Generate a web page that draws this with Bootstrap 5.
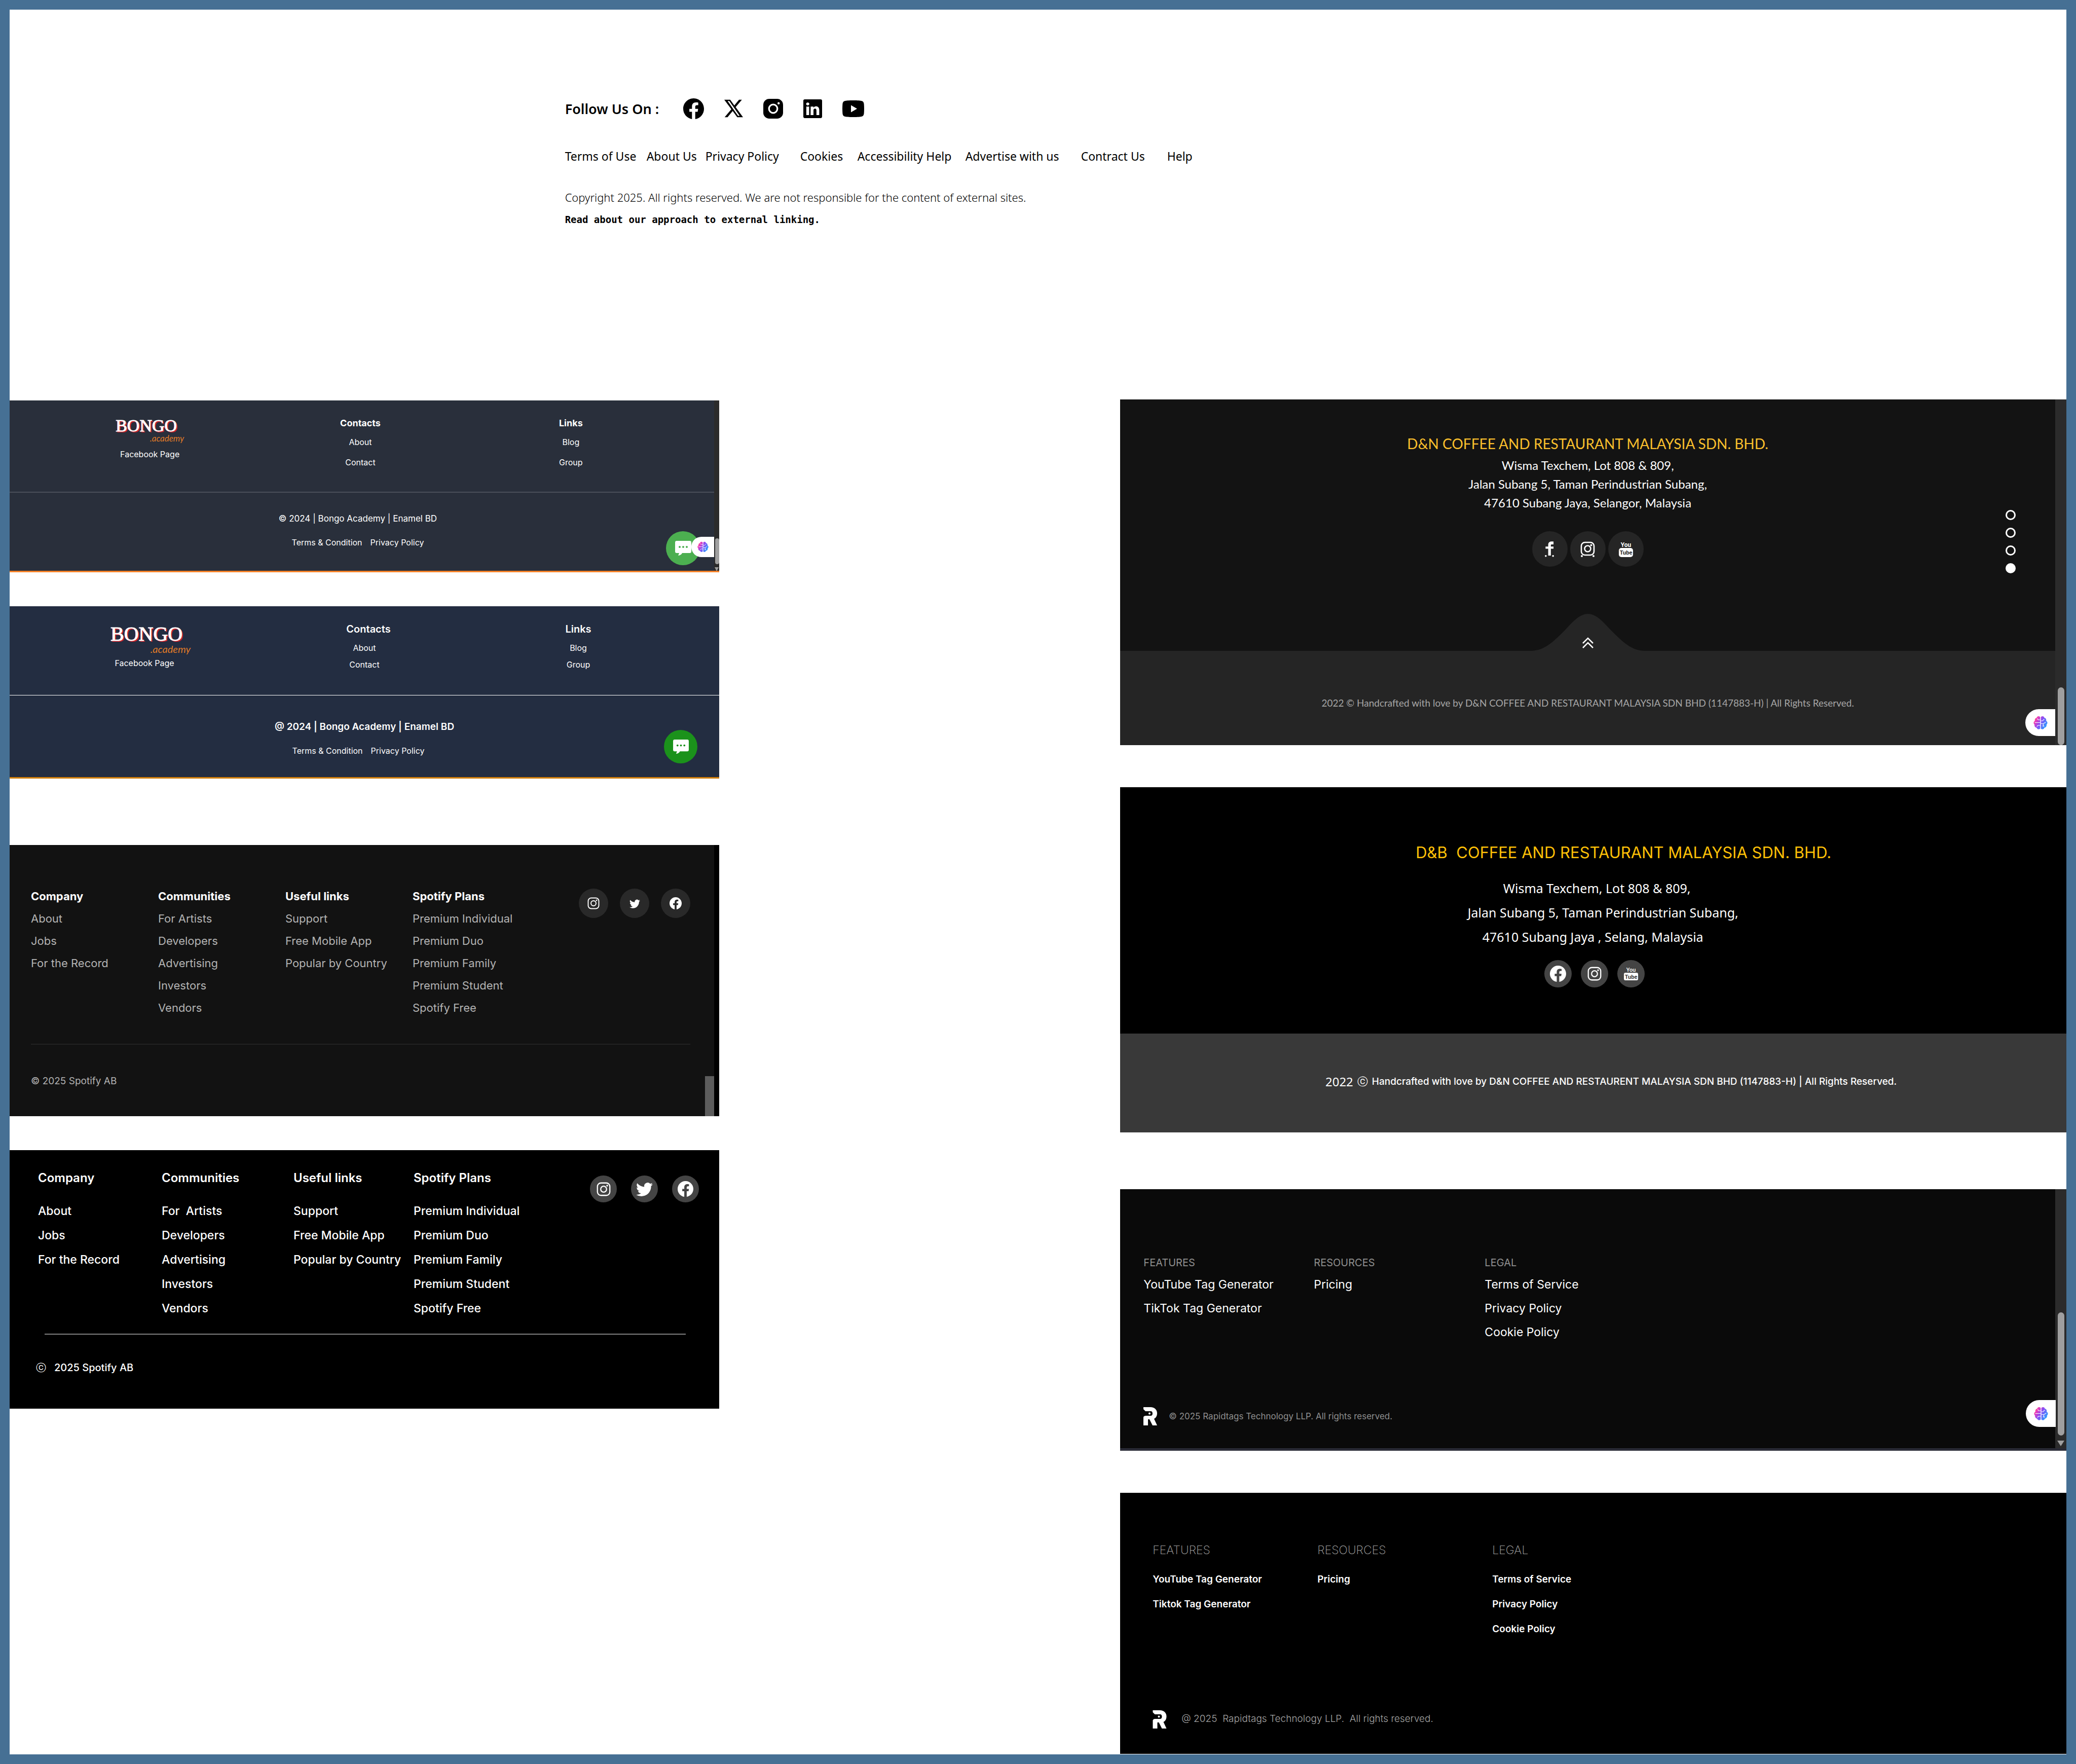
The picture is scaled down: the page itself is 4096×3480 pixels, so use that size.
<!DOCTYPE html>
<html lang="en">
<head>
<meta charset="utf-8">
<meta name="viewport" content="width=device-width, initial-scale=1">
<title>Footer designs</title>
<link rel="stylesheet" href="https://cdn.jsdelivr.net/npm/bootstrap@5.3.0/dist/css/bootstrap.min.css">
<style>
  body { background: #467094; padding: 19px; font-family: Inter, "Open Sans", sans-serif; color: #fff; line-height: 1; }
  a { color: inherit; text-decoration: none; white-space: pre; }
  h2, p, ul { margin: 0; padding: 0; font-size: inherit; line-height: inherit; }
  ul { list-style: none; }
  button { border: 0; padding: 0; background: none; color: inherit; }
  svg { display: block; flex: none; }
  .sheet { min-height: calc(100vh - 38px); background: #fff; }

  /* plain news footer */
  .news { min-height: 769px; padding: 171px 0 0 27%; color: #000; font-family: "Noto Sans", sans-serif; }
  .follow { height: 48px; gap: 40px; font-size: 27px; font-weight: 600; }
  .follow .label { margin-right: 8px; }
  .news-links { margin-top: 53px; display: grid; grid-template-columns: 161px 116px 187px 113px 213px 228px 170px auto; font-size: 23px; line-height: 34px; }
  .news .legal { margin-top: 46px; font-size: 22px; font-weight: 300; line-height: 36px; }
  .news .policy { margin-top: 8px; font: 700 19px/36px "DejaVu Sans Mono", monospace; }

  .left-side { flex: 0 0 34.5%; padding-top: 2px; }
  .right-side { flex: 0 0 46%; }
  .panel { position: relative; overflow: hidden; }
  .disc { display: flex; align-items: center; justify-content: center; border-radius: 50%; flex: none; }
  .rail { flex: none; background: #2b2b2b; }
  .thumb { position: absolute; background: #9f9f9f; border-radius: 7px; }
  .arrow { position: absolute; border: solid transparent; border-top-color: #9f9f9f; border-bottom: 0; }
  .tab { position: absolute; background: #fff; border-radius: 30px 0 0 30px; display: flex; align-items: center; justify-content: center; }
  .chat { position: absolute; }
  .wordmark { display: grid; text-align: left; font-family: "Liberation Serif", serif; text-shadow: 1px 1px 0 #d0202a, 2px 2px 0 #d0202a, -1px 0 0 #d0202a; -webkit-text-stroke: 1px #fff; }
  .wordmark small { justify-self: end; font-family: Lato, sans-serif; font-style: italic; color: #e07b28; text-shadow: none; -webkit-text-stroke: 0; }

  /* bongo */
  .bongo { height: 339px; background: #292f3b; border-bottom: 3px solid #f5822a; font-size: 16px; }
  .bongo .top { height: 182px; padding: 0 75px 0 69px; border-bottom: 2px solid #4a4f5a; text-align: center; }
  .bongo .brand { padding-top: 30px; line-height: 24px; }
  .bongo .wordmark { width: 135px; font-size: 34px; line-height: 39px; }
  .bongo .wordmark small { font-size: 17px; line-height: 12px; }
  .bongo .brand a { margin-top: 13px; }
  .bongo .list { padding-top: 33px; line-height: 40px; }
  .bongo .list h2 { font-size: 18px; line-height: 24px; font-weight: 700; margin-bottom: 5px; }
  .bongo .base { padding: 36px 16px 0 0; line-height: 30px; }
  .bongo .base p { font-size: 17px; margin-bottom: 17px; }
  .bongo .rail { width: 10px; height: 339px; position: relative; z-index: 2; }
  .bongo .thumb { left: 2px; top: 272px; width: 8px; height: 51px; }
  .bongo .arrow { left: 1px; top: 329px; border-width: 8px 4px 0; }
  .bongo .chat { right: 38px; bottom: 11px; width: 67px; height: 67px; background: #4caf50; color: #4caf50; }
  .bongo .tab { right: 10px; top: 269px; width: 45px; height: 40px; }

  .bongo2 { height: 340px; margin-top: 67px; background: #232d41; border-bottom: 3px solid #d17e0a; font-size: 16px; }
  .bongo2 .top { height: 176px; padding: 0 67px; border-bottom: 1px solid #fff; text-align: center; }
  .bongo2 .brand { padding-top: 32px; line-height: 24px; }
  .bongo2 .wordmark { width: 158px; font-size: 40px; line-height: 45px; }
  .bongo2 .wordmark small { font-size: 20px; line-height: 14px; }
  .bongo2 .brand a { margin-top: 9px; }
  .bongo2 .list { padding-top: 33px; line-height: 33px; }
  .bongo2 .list h2 { font-size: 20px; line-height: 24px; font-weight: 600; margin-bottom: 9px; }
  .bongo2 .base { padding-top: 47px; line-height: 30px; }
  .bongo2 .base p { font-size: 19px; font-weight: 600; margin-bottom: 17px; }
  .bongo2 .chat { right: 43px; bottom: 27px; width: 66px; height: 66px; background: #1b921b; color: #1b921b; }

  /* spotify */
  .spot { height: 535px; margin-top: 131px; background: #121212; border-right: 10px solid #000; padding: 79px 47px 0 42px; font-size: 22px; line-height: 44px; color: #b3b3b3; }
  .spot .cols { display: grid; grid-template-columns: 251px 251px 251px 1fr auto; }
  .spot h2 { font-weight: 700; color: #fff; }
  .spot .social { gap: 23px; padding-top: 7px; color: #fff; }
  .spot .disc { width: 58px; height: 58px; background: #292929; }
  .spot .rule { margin-top: 49px; height: 2px; background: #222; }
  .spot p { margin-top: 57px; font-size: 19px; line-height: 30px; }
  .spot .thumb { right: 0; bottom: 0; width: 18px; height: 79px; border-radius: 0; background: #5c5c5c; }

  .spot2 { height: 510px; margin-top: 67px; background: #000; padding: 40px 40px 0 56px; font-size: 23px; font-weight: 500; line-height: 48px; }
  .spot2 .cols { display: grid; grid-template-columns: 244px 260px 237px 1fr auto; }
  .spot2 h2 { font-size: 24px; font-weight: 600; line-height: 30px; margin-bottom: 26px; }
  .spot2 .social { gap: 28px; padding-top: 10px; }
  .spot2 .disc { width: 53px; height: 53px; background: #444; }
  .spot2 .rule { margin: 26px 26px 0 13px; height: 2px; background: #808080; }
  .spot2 p { margin: 50px 0 0 -4px; gap: 16px; font-size: 20px; line-height: 30px; }

  /* coffee */
  .coffee { height: 682px; background: #252525; font-family: Lato, "Open Sans", sans-serif; text-align: center; }
  .coffee .top { position: relative; height: 496px; padding-top: 68px; background: #131313; font-size: 24px; line-height: 37px; }
  .coffee h2 { font-size: 28px; line-height: 38px; font-weight: 400; color: #fbc02d; margin-bottom: 5px; }
  .coffee .social { margin-top: 38px; gap: 5px; }
  .coffee .disc { width: 70px; height: 70px; background: #252525; }
  .coffee .base { padding-top: 88px; font-size: 19px; line-height: 30px; color: #a6a6a6; }
  .coffee .to-top { position: absolute; bottom: 0; left: 50%; margin-left: -113px; }
  .coffee .pager { position: absolute; right: 78px; top: 218px; display: grid; gap: 15px; }
  .coffee .pager button { width: 20px; height: 20px; border: 3px solid #fff; border-radius: 50%; background: none; }
  .coffee .pager button.on { background: #fff; }
  .coffee .rail, .tags .rail { width: 22px; position: relative; }
  .coffee .thumb { left: 5px; bottom: 0; width: 13px; height: 114px; }
  .coffee .tab { right: 22px; top: 611px; width: 59px; height: 53px; }

  .coffee2 { height: 681px; margin-top: 83px; background: #393939; text-align: center; }
  .coffee2 .top { height: 486px; padding-top: 109px; background: #000; }
  .coffee2 h2 { padding-left: 119px; font-size: 31px; font-weight: 400; line-height: 40px; color: #ffc107; white-space: pre; margin-bottom: 26px; }
  .coffee2 address { margin: 0; padding-left: 14px; font: 400 25px/48px "Noto Sans", sans-serif; }
  .coffee2 .social { margin-top: 22px; padding-left: 5px; gap: 18px; }
  .coffee2 .disc { width: 54px; height: 54px; background: #444; }
  .coffee2 .base { padding: 75px 0 0 70px; gap: 8px; font-size: 19px; font-weight: 500; line-height: 40px; }
  .coffee2 .year { font: 400 24px/40px "Noto Sans", sans-serif; }
  .coffee2 .mark-c { font-size: 21px; font-weight: 300; }

  /* rapidtags */
  .tags { height: 516px; margin-top: 112px; background: #0a0a0a; border-bottom: 5px solid #2a2b36; font-size: 23px; line-height: 47px; }
  .tags .body { padding: 130px 0 0 46px; }
  .tags .cols { display: grid; grid-template-columns: 336px 337px auto; }
  .tags h2 { font-size: 20px; font-weight: 400; line-height: 30px; color: #8f8f8f; margin-bottom: 5px; }
  .tags .sign { margin-top: 124px; gap: 23px; font-size: 17px; line-height: 36px; color: #8f8f8f; }
  .tags .tab { right: 21px; top: 416px; width: 59px; height: 53px; }
  .tags .thumb { left: 5px; top: 243px; width: 13px; height: 243px; }
  .tags .arrow { left: 4px; top: 496px; border-width: 11px 7px 0; }

  .tags2 { height: 515px; margin-top: 83px; background: #000; padding: 98px 0 0 64px; font-size: 19px; font-weight: 600; line-height: 49px; }
  .tags2 .cols { display: grid; grid-template-columns: 325px 345px auto; }
  .tags2 h2 { font-size: 23px; font-weight: 200; line-height: 30px; color: #a6a6a6; margin-bottom: 18px; }
  .tags2 .sign { margin-top: 136px; gap: 29px; font-weight: 300; line-height: 34px; color: #a6a6a6; white-space: pre; }
  .sign svg { color: #fff; }
</style>
<script src="https://cdn.jsdelivr.net/npm/bootstrap@5.3.0/dist/js/bootstrap.bundle.min.js"></script>
</head>
<body>
<svg width="0" height="0" class="position-absolute" aria-hidden="true">
  <defs>
    <linearGradient id="brainFill" x1="0" x2="1" y1="0" y2=".6"><stop offset="0" stop-color="#ff8a3c"/><stop offset=".25" stop-color="#f03cb4"/><stop offset=".55" stop-color="#8a4df5"/><stop offset="1" stop-color="#2f9bff"/></linearGradient>
    <symbol id="facebook" viewBox="0 0 16 16"><path fill="currentColor" d="M16 8.049c0-4.446-3.582-8.05-8-8.05C3.58 0-.002 3.603-.002 8.05c0 4.017 2.926 7.347 6.75 7.951v-5.625h-2.03V8.05H6.75V6.275c0-2.017 1.195-3.131 3.022-3.131.876 0 1.791.157 1.791.157v1.98h-1.009c-.993 0-1.303.621-1.303 1.258v1.51h2.218l-.354 2.326H9.25V16c3.824-.604 6.75-3.934 6.75-7.951z"/></symbol>
    <symbol id="xmark" viewBox="0 0 16 16"><path fill="currentColor" d="M12.6.5h2.454l-5.36 6.342L16 15.5h-4.937l-3.867-5.32-4.425 5.32H.316l5.733-6.82L0 .5h5.063l3.495 4.883L12.601.5Zm-.86 13.778h1.36L4.323 1.645H2.865l8.875 12.633Z"/></symbol>
    <symbol id="instaSolid" viewBox="0 0 40 40"><rect width="40" height="40" rx="12" fill="currentColor"/><circle cx="20" cy="20" r="8.5" fill="none" stroke="#fff" stroke-width="3.4"/><circle cx="31" cy="9" r="2.3" fill="#fff"/></symbol>
    <symbol id="insta" viewBox="0 0 32 32"><rect x="2" y="2" width="28" height="28" rx="8" fill="none" stroke="currentColor" stroke-width="2.6"/><circle cx="16" cy="16" r="6.6" fill="none" stroke="currentColor" stroke-width="2.6"/><circle cx="24" cy="8" r="2" fill="currentColor"/></symbol>
    <symbol id="linkedin" viewBox="0 0 16 16"><path fill="currentColor" d="M0 1.146C0 .513.526 0 1.175 0h13.65C15.474 0 16 .513 16 1.146v13.708c0 .633-.526 1.146-1.175 1.146H1.175C.526 16 0 15.487 0 14.854V1.146zm4.943 12.248V6.169H2.542v7.225h2.401zm-1.2-8.212c.837 0 1.358-.554 1.358-1.248-.015-.709-.52-1.248-1.342-1.248-.822 0-1.359.54-1.359 1.248 0 .694.521 1.248 1.327 1.248h.016zm4.908 8.212V9.359c0-.216.016-.432.08-.586.173-.431.568-.878 1.232-.878.869 0 1.216.662 1.216 1.634v3.865h2.401V9.25c0-2.22-1.184-3.252-2.764-3.252-1.274 0-1.845.7-2.165 1.193v.025h-.016a5.54 5.54 0 0 1 .016-.025V6.169h-2.4c.03.678 0 7.225 0 7.225h2.4z"/></symbol>
    <symbol id="youtube" viewBox="0 0 43 33"><path fill="currentColor" fill-rule="evenodd" d="M21.500 0C30 0 36 .4 38.500 1.200 41 2 42.300 4 42.600 7c.5 6 .5 13 0 19-.3 3-1.600 5-4.100 5.800C36 32.600 30 33 21.500 33S7 32.600 4.500 31.800C2 31 .7 29 .4 26c-.5-6-.5-13 0-19C.7 4 2 2 4.500 1.200 7 .4 13 0 21.500 0zM17 9.500v14l12-7z"/></symbol>
    <symbol id="twitter" viewBox="0 0 16 16"><path fill="currentColor" d="M5.026 15c6.038 0 9.341-5.003 9.341-9.334 0-.14 0-.282-.006-.422A6.685 6.685 0 0 0 16 3.542a6.658 6.658 0 0 1-1.889.518 3.301 3.301 0 0 0 1.447-1.817 6.533 6.533 0 0 1-2.087.793A3.286 3.286 0 0 0 7.875 6.03a9.325 9.325 0 0 1-6.767-3.429 3.289 3.289 0 0 0 1.018 4.382A3.323 3.323 0 0 1 .64 6.575v.045a3.288 3.288 0 0 0 2.632 3.218 3.203 3.203 0 0 1-.865.115 3.23 3.23 0 0 1-.614-.057 3.283 3.283 0 0 0 3.067 2.277A6.588 6.588 0 0 1 .78 13.58a6.32 6.32 0 0 1-.78-.045A9.344 9.344 0 0 0 5.026 15z"/></symbol>
    <symbol id="fmark" viewBox="0 0 22 34"><path fill="currentColor" d="M19 1v6h-3.500c-1.500 0-2 .7-2 2v2.500H19V16h-5.500v14H8V16H2.500v-4.500H8V8c0-4.500 2.500-7 7-7z"/><circle cx="3" cy="31" r="1.900" fill="currentColor"/><circle cx="18" cy="31" r="1.900" fill="currentColor"/></symbol>
    <symbol id="speech" viewBox="0 0 32 29"><path fill="#fff" d="M3 0h26a3 3 0 0 1 3 3v18a3 3 0 0 1-3 3H14c-1 2-3 4-7 5-1 0-1-1 0-2l1-3H3a3 3 0 0 1-3-3V3a3 3 0 0 1 3-3z"/><circle cx="9" cy="12" r="2" fill="currentColor"/><circle cx="16" cy="12" r="2" fill="currentColor"/><circle cx="23" cy="12" r="2" fill="currentColor"/></symbol>
    <symbol id="brain" viewBox="0 0 28 28"><path fill="url(#brainFill)" d="M13.300 2.500C11-.2 7 .8 6.500 4 3.500 4.500 2 7.500 3 10c-3 1.500-3.500 5.500-.8 7.500C1.500 21 4 23.500 6.500 23.700c.8 3.300 4.800 4 6.800 1.600zM14.700 2.500c2.300-2.700 6.300-1.700 6.800 1.500 3 .5 4.500 3.500 3.500 6 3 1.500 3.500 5.500.8 7.500.7 3.500-1.800 6-4.300 6.200-.8 3.300-4.800 4-6.800 1.600z"/><path fill="none" stroke="#fff" stroke-width="1.100" stroke-linecap="round" d="M13 8H9.500L7.500 6M3 13.500h10M13 19H9l-2 2M15 10h3l3-3M15 15l4 1 5-3M18 20l3 1M19 16l1 4"/></symbol>
    <symbol id="rmark" viewBox="0 0 27 36"><path fill="currentColor" d="M0 0h14c8 0 13 5 13 12 0 5-2 9-6 11l6 13h-9l-6-12H9v12H0V21c0-3 2-4 5-4h9c3 0 4-2 4-4.500S17 8 14 8H4L0 4z"/><circle cx="12" cy="12.500" r="2" fill="currentColor"/></symbol>
  </defs>
</svg>

<main class="sheet">
  <footer class="news">
    <div class="follow d-flex align-items-center">
      <span class="label">Follow Us On :</span>
      <a href="#" aria-label="Facebook"><svg width="41" height="41"><use href="#facebook"/></svg></a>
      <a href="#" aria-label="X"><svg width="37" height="38"><use href="#xmark"/></svg></a>
      <a href="#" aria-label="Instagram"><svg width="39" height="39"><use href="#instaSolid"/></svg></a>
      <a href="#" aria-label="LinkedIn"><svg width="37" height="37"><use href="#linkedin"/></svg></a>
      <a href="#" aria-label="YouTube"><svg width="43" height="33"><use href="#youtube"/></svg></a>
    </div>
    <nav class="news-links">
      <a href="#">Terms of Use</a><a href="#">About Us</a><a href="#">Privacy Policy</a><a href="#">Cookies</a><a href="#">Accessibility Help</a><a href="#">Advertise with us</a><a href="#">Contract Us</a><a href="#">Help</a>
    </nav>
    <p class="legal">Copyright 2025. All rights reserved. We are not responsible for the content of external sites.</p>
    <p class="policy"><a href="#">Read about our approach to external linking.</a></p>
  </footer>

  <div class="d-flex justify-content-between align-items-start">
    <div class="left-side">
      <footer class="panel bongo">
        <div class="d-flex">
          <div class="flex-grow-1">
            <div class="top row g-0">
              <div class="brand col d-flex flex-column align-items-center">
                <div class="wordmark">BONGO<small>.academy</small></div>
                <a href="#">Facebook Page</a>
              </div>
              <div class="list col"><h2>Contacts</h2><ul><li><a href="#">About</a></li><li><a href="#">Contact</a></li></ul></div>
              <div class="list col"><h2>Links</h2><ul><li><a href="#">Blog</a></li><li><a href="#">Group</a></li></ul></div>
            </div>
            <div class="base text-center">
              <p>© 2024 | Bongo Academy | Enamel BD</p>
              <div class="d-flex justify-content-center gap-3"><a href="#">Terms &amp; Condition</a><a href="#">Privacy Policy</a></div>
            </div>
          </div>
          <div class="rail"><span class="thumb"></span><span class="arrow"></span></div>
        </div>
        <button class="chat disc" aria-label="Chat"><svg width="32" height="29"><use href="#speech"/></svg></button>
        <button class="tab" aria-label="Assistant"><svg width="22" height="22"><use href="#brain"/></svg></button>
      </footer>

      <footer class="panel bongo2">
        <div class="top row g-0">
          <div class="brand col d-flex flex-column align-items-center">
            <div class="wordmark">BONGO<small>.academy</small></div>
            <a href="#" class="pe-4">Facebook Page</a>
          </div>
          <div class="list col"><h2 class="ps-3">Contacts</h2><ul><li><a href="#">About</a></li><li><a href="#">Contact</a></li></ul></div>
          <div class="list col"><h2>Links</h2><ul><li><a href="#">Blog</a></li><li><a href="#">Group</a></li></ul></div>
        </div>
        <div class="base text-center">
          <p>@ 2024 | Bongo Academy | Enamel BD</p>
          <div class="d-flex justify-content-center gap-3 pe-4"><a href="#">Terms &amp; Condition</a><a href="#">Privacy Policy</a></div>
        </div>
        <button class="chat disc" aria-label="Chat"><svg width="31" height="28"><use href="#speech"/></svg></button>
      </footer>

      <footer class="panel spot">
        <div class="cols">
          <div><h2>Company</h2><ul><li><a href="#">About</a></li><li><a href="#">Jobs</a></li><li><a href="#">For the Record</a></li></ul></div>
          <div><h2>Communities</h2><ul><li><a href="#">For Artists</a></li><li><a href="#">Developers</a></li><li><a href="#">Advertising</a></li><li><a href="#">Investors</a></li><li><a href="#">Vendors</a></li></ul></div>
          <div><h2>Useful links</h2><ul><li><a href="#">Support</a></li><li><a href="#">Free Mobile App</a></li><li><a href="#">Popular by Country</a></li></ul></div>
          <div><h2>Spotify Plans</h2><ul><li><a href="#">Premium Individual</a></li><li><a href="#">Premium Duo</a></li><li><a href="#">Premium Family</a></li><li><a href="#">Premium Student</a></li><li><a href="#">Spotify Free</a></li></ul></div>
          <div class="social d-flex">
            <a href="#" class="disc" aria-label="Instagram"><svg width="24" height="24"><use href="#insta"/></svg></a>
            <a href="#" class="disc" aria-label="Twitter"><svg width="21" height="21"><use href="#twitter"/></svg></a>
            <a href="#" class="disc" aria-label="Facebook"><svg width="24" height="24"><use href="#facebook"/></svg></a>
          </div>
        </div>
        <div class="rule"></div>
        <p>© 2025 Spotify AB</p>
        <span class="thumb"></span>
      </footer>

      <footer class="panel spot2">
        <div class="cols">
          <div><h2>Company</h2><ul><li><a href="#">About</a></li><li><a href="#">Jobs</a></li><li><a href="#">For the Record</a></li></ul></div>
          <div><h2>Communities</h2><ul><li><a href="#">For  Artists</a></li><li><a href="#">Developers</a></li><li><a href="#">Advertising</a></li><li><a href="#">Investors</a></li><li><a href="#">Vendors</a></li></ul></div>
          <div><h2>Useful links</h2><ul><li><a href="#">Support</a></li><li><a href="#">Free Mobile App</a></li><li><a href="#">Popular by Country</a></li></ul></div>
          <div><h2>Spotify Plans</h2><ul><li><a href="#">Premium Individual</a></li><li><a href="#">Premium Duo</a></li><li><a href="#">Premium Family</a></li><li><a href="#">Premium Student</a></li><li><a href="#">Spotify Free</a></li></ul></div>
          <div class="social d-flex">
            <a href="#" class="disc" aria-label="Instagram"><svg width="28" height="28"><use href="#insta"/></svg></a>
            <a href="#" class="disc" aria-label="Twitter"><svg width="33" height="33"><use href="#twitter"/></svg></a>
            <a href="#" class="disc" aria-label="Facebook"><svg width="31" height="31"><use href="#facebook"/></svg></a>
          </div>
        </div>
        <div class="rule"></div>
        <p class="d-flex"><span class="fw-light">ⓒ</span><span>2025 Spotify AB</span></p>
      </footer>
    </div>

    <div class="right-side">
      <footer class="panel coffee">
        <div class="d-flex h-100">
          <div class="flex-grow-1">
            <div class="top">
              <h2>D&amp;N COFFEE AND RESTAURANT MALAYSIA SDN. BHD.</h2>
              <div>Wisma Texchem, Lot 808 &amp; 809,</div>
              <div>Jalan Subang 5, Taman Perindustrian Subang,</div>
              <div>47610 Subang Jaya, Selangor, Malaysia</div>
              <div class="social d-flex justify-content-center">
                <a href="#" class="disc" aria-label="Facebook"><svg width="21" height="33"><use href="#fmark"/></svg></a>
                <a href="#" class="disc" aria-label="Instagram"><svg width="29" height="31" viewBox="0 0 29 31"><g fill="none" stroke="#fff" stroke-width="2.600"><rect x="2" y="2" width="25" height="25" rx="7"/><circle cx="14.500" cy="14.500" r="6"/></g><g fill="#fff"><circle cx="21.500" cy="7.500" r="2"/><circle cx="3" cy="29" r="2"/><circle cx="26" cy="29" r="2"/></g></svg></a>
                <a href="#" class="disc" aria-label="YouTube"><svg width="28" height="34" viewBox="0 0 28 34"><text x="14" y="13" text-anchor="middle" font-family="Roboto, sans-serif" font-weight="700" font-size="12" fill="#fff">You</text><rect x="0" y="15" width="28" height="18" rx="5" fill="#fff"/><text x="14" y="28" text-anchor="middle" font-family="Roboto, sans-serif" font-weight="700" font-size="11" fill="#252525">Tube</text></svg></a>
              </div>
              <button class="to-top" aria-label="Back to top"><svg width="226" height="73" viewBox="0 0 226 73"><path fill="#252525" d="M0 73C28 73 45 54 66 34 82 17 96 0 113 0s31 17 47 34c21 20 38 39 66 39z"/><path fill="none" stroke="#fff" stroke-width="2.600" d="M103 58l10-10 10 10M103 67l10-10 10 10"/></svg></button>
              <div class="pager"><button aria-label="Section 1"></button><button aria-label="Section 2"></button><button aria-label="Section 3"></button><button class="on" aria-label="Section 4"></button></div>
            </div>
            <div class="base">2022 © Handcrafted with love by D&amp;N COFFEE AND RESTAURANT MALAYSIA SDN BHD (1147883-H) | All Rights Reserved.</div>
          </div>
          <div class="rail"><span class="thumb"></span></div>
        </div>
        <button class="tab" aria-label="Assistant"><svg width="28" height="28"><use href="#brain"/></svg></button>
      </footer>

      <footer class="panel coffee2">
        <div class="top">
          <h2>D&amp;B  COFFEE AND RESTAURANT MALAYSIA SDN. BHD.</h2>
          <address>
            <div>Wisma Texchem, Lot 808 &amp; 809,</div>
            <div class="ps-4">Jalan Subang 5, Taman Perindustrian Subang,</div>
            <div class="pe-3">47610 Subang Jaya , Selang, Malaysia</div>
          </address>
          <div class="social d-flex justify-content-center">
            <a href="#" class="disc" aria-label="Facebook"><svg width="32" height="32"><use href="#facebook"/></svg></a>
            <a href="#" class="disc" aria-label="Instagram"><svg width="28" height="28"><use href="#insta"/></svg></a>
            <a href="#" class="disc" aria-label="YouTube"><svg width="28" height="30" viewBox="0 0 28 30"><text x="14" y="11" text-anchor="middle" font-family="Roboto, sans-serif" font-weight="500" font-size="11" fill="#fff">You</text><rect x="0" y="13" width="28" height="15" rx="3" fill="#fff"/><text x="14" y="25" text-anchor="middle" font-family="Roboto, sans-serif" font-weight="700" font-size="11" fill="#393939">Tube</text></svg></a>
          </div>
        </div>
        <div class="base d-flex justify-content-center"><span class="year">2022</span><span class="mark-c">ⓒ</span><span>Handcrafted with love by D&amp;N COFFEE AND RESTAURENT MALAYSIA SDN BHD (1147883-H) | All Rights Reserved.</span></div>
      </footer>

      <footer class="panel tags">
        <div class="d-flex h-100">
          <div class="body flex-grow-1">
            <div class="cols">
              <div><h2>FEATURES</h2><ul><li><a href="#">YouTube Tag Generator</a></li><li><a href="#">TikTok Tag Generator</a></li></ul></div>
              <div><h2>RESOURCES</h2><ul><li><a href="#">Pricing</a></li></ul></div>
              <div><h2>LEGAL</h2><ul><li><a href="#">Terms of Service</a></li><li><a href="#">Privacy Policy</a></li><li><a href="#">Cookie Policy</a></li></ul></div>
            </div>
            <div class="sign d-flex"><svg width="27" height="36"><use href="#rmark"/></svg><span>© 2025 Rapidtags Technology LLP. All rights reserved.</span></div>
          </div>
          <div class="rail"><span class="thumb"></span><span class="arrow"></span></div>
        </div>
        <button class="tab" aria-label="Assistant"><svg width="28" height="28"><use href="#brain"/></svg></button>
      </footer>

      <footer class="panel tags2">
        <div class="cols">
          <div><h2>FEATURES</h2><ul><li><a href="#">YouTube Tag Generator</a></li><li><a href="#">Tiktok Tag Generator</a></li></ul></div>
          <div><h2>RESOURCES</h2><ul><li><a href="#">Pricing</a></li></ul></div>
          <div><h2>LEGAL</h2><ul><li><a href="#">Terms of Service</a></li><li><a href="#">Privacy Policy</a></li><li><a href="#">Cookie Policy</a></li></ul></div>
        </div>
        <div class="sign d-flex"><svg width="28" height="36"><use href="#rmark"/></svg><span>@ 2025  Rapidtags Technology LLP.  All rights reserved.</span></div>
      </footer>
    </div>
  </div>
</main>
</body>
</html>
